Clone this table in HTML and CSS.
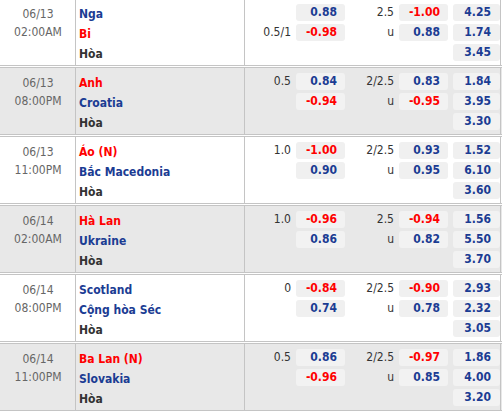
FILE: index.html
```html
<!DOCTYPE html>
<html>
<head>
<meta charset="utf-8">
<link rel="stylesheet" href="styles.css">
</head>
<body>
<div class="board">

  <div class="match">
    <div class="when"><div>06/13</div><div>02:00AM</div></div>
    <div class="teams"><div class="t blue">Nga</div><div class="t red">Bi</div><div class="t draw">Hòa</div></div>
    <div class="odds">
      <span class="ln"></span><span class="box b">0.88</span><span class="ln">2.5</span><span class="box r">-1.00</span><span class="box x b">4.25</span>
      <span class="ln">0.5/1</span><span class="box r">-0.98</span><span class="ln">u</span><span class="box b">0.88</span><span class="box x b">1.74</span>
      <span class="ln"></span><span></span><span class="ln"></span><span></span><span class="box x b">3.45</span>
    </div>
  </div>

  <div class="match alt">
    <div class="when"><div>06/13</div><div>08:00PM</div></div>
    <div class="teams"><div class="t red">Anh</div><div class="t blue">Croatia</div><div class="t draw">Hòa</div></div>
    <div class="odds">
      <span class="ln">0.5</span><span class="box b">0.84</span><span class="ln">2/2.5</span><span class="box b">0.83</span><span class="box x b">1.84</span>
      <span class="ln"></span><span class="box r">-0.94</span><span class="ln">u</span><span class="box r">-0.95</span><span class="box x b">3.95</span>
      <span class="ln"></span><span></span><span class="ln"></span><span></span><span class="box x b">3.30</span>
    </div>
  </div>

  <div class="match">
    <div class="when"><div>06/13</div><div>11:00PM</div></div>
    <div class="teams"><div class="t red">Áo (N)</div><div class="t blue">Bắc Macedonia</div><div class="t draw">Hòa</div></div>
    <div class="odds">
      <span class="ln">1.0</span><span class="box r">-1.00</span><span class="ln">2/2.5</span><span class="box b">0.93</span><span class="box x b">1.52</span>
      <span class="ln"></span><span class="box b">0.90</span><span class="ln">u</span><span class="box b">0.95</span><span class="box x b">6.10</span>
      <span class="ln"></span><span></span><span class="ln"></span><span></span><span class="box x b">3.60</span>
    </div>
  </div>

  <div class="match alt">
    <div class="when"><div>06/14</div><div>02:00AM</div></div>
    <div class="teams"><div class="t red">Hà Lan</div><div class="t blue">Ukraine</div><div class="t draw">Hòa</div></div>
    <div class="odds">
      <span class="ln">1.0</span><span class="box r">-0.96</span><span class="ln">2.5</span><span class="box r">-0.94</span><span class="box x b">1.56</span>
      <span class="ln"></span><span class="box b">0.86</span><span class="ln">u</span><span class="box b">0.82</span><span class="box x b">5.50</span>
      <span class="ln"></span><span></span><span class="ln"></span><span></span><span class="box x b">3.70</span>
    </div>
  </div>

  <div class="match">
    <div class="when"><div>06/14</div><div>08:00PM</div></div>
    <div class="teams"><div class="t blue">Scotland</div><div class="t blue">Cộng hòa Séc</div><div class="t draw">Hòa</div></div>
    <div class="odds">
      <span class="ln">0</span><span class="box r">-0.84</span><span class="ln">2/2.5</span><span class="box r">-0.90</span><span class="box x b">2.93</span>
      <span class="ln"></span><span class="box b">0.74</span><span class="ln">u</span><span class="box b">0.78</span><span class="box x b">2.32</span>
      <span class="ln"></span><span></span><span class="ln"></span><span></span><span class="box x b">3.05</span>
    </div>
  </div>

  <div class="match alt">
    <div class="when"><div>06/14</div><div>11:00PM</div></div>
    <div class="teams"><div class="t red">Ba Lan (N)</div><div class="t blue">Slovakia</div><div class="t draw">Hòa</div></div>
    <div class="odds">
      <span class="ln">0.5</span><span class="box b">0.86</span><span class="ln">2/2.5</span><span class="box r">-0.97</span><span class="box x b">1.86</span>
      <span class="ln"></span><span class="box r">-0.96</span><span class="ln">u</span><span class="box b">0.85</span><span class="box x b">4.00</span>
      <span class="ln"></span><span></span><span class="ln"></span><span></span><span class="box x b">3.20</span>
    </div>
  </div>

</div>
</body>
</html>
```

FILE: styles.css
```css
* { box-sizing: border-box; }
html, body { margin: 0; padding: 0; background: #fff; }
body {
  font-family: "DejaVu Sans Condensed", "DejaVu Sans", Tahoma, sans-serif;
  font-stretch: condensed;
  font-size: 12px;
  color: #333;
}
.board {
  width: 502px;
  margin-top: -2px;
}
.match {
  display: flex;
  border-top: 1px solid #c4c4c4;
  border-bottom: 1px solid #c4c4c4;
  margin-bottom: 1px;
  background: #fff;
}
.match.alt { background: #e8e8e8; }
.when {
  width: 76px;
  border-right: 1px solid #c4c4c4;
  padding-top: 6px;
  text-align: center;
  color: #666;
  line-height: 18px;
  padding-left: 1px;
}
.teams {
  width: 169px;
  border-right: 1px solid #c4c4c4;
  padding: 6px 0 0 3px;
}
.t {
  height: 20px;
  line-height: 18px;
  font-weight: bold;
  white-space: nowrap;
}
.t.blue { color: #1b3c93; }
.t.red { color: #f00; }
.t.draw { color: #333; }
.odds {
  width: 256px;
  border-right: 1px solid #c4c4c4;
  padding: 5px 0 1px 0;
  display: grid;
  grid-template-columns: 51px 49px 54px 49px 52px;
  grid-auto-rows: 20px;
}
.ln {
  text-align: right;
  padding-right: 5px;
  line-height: 17px;
  color: #333;
}
.box {
  height: 17px;
  line-height: 17px;
  background: #f0f0f0;
  border-radius: 3px;
  text-align: right;
  padding-right: 8px;
  font-weight: bold;
}
.match.alt .box { background: #f2f2f2; }
.box.x { width: 47px; justify-self: end; padding-right: 9px; }
.b { color: #1b3c93; }
.r { color: #f00; }
```
